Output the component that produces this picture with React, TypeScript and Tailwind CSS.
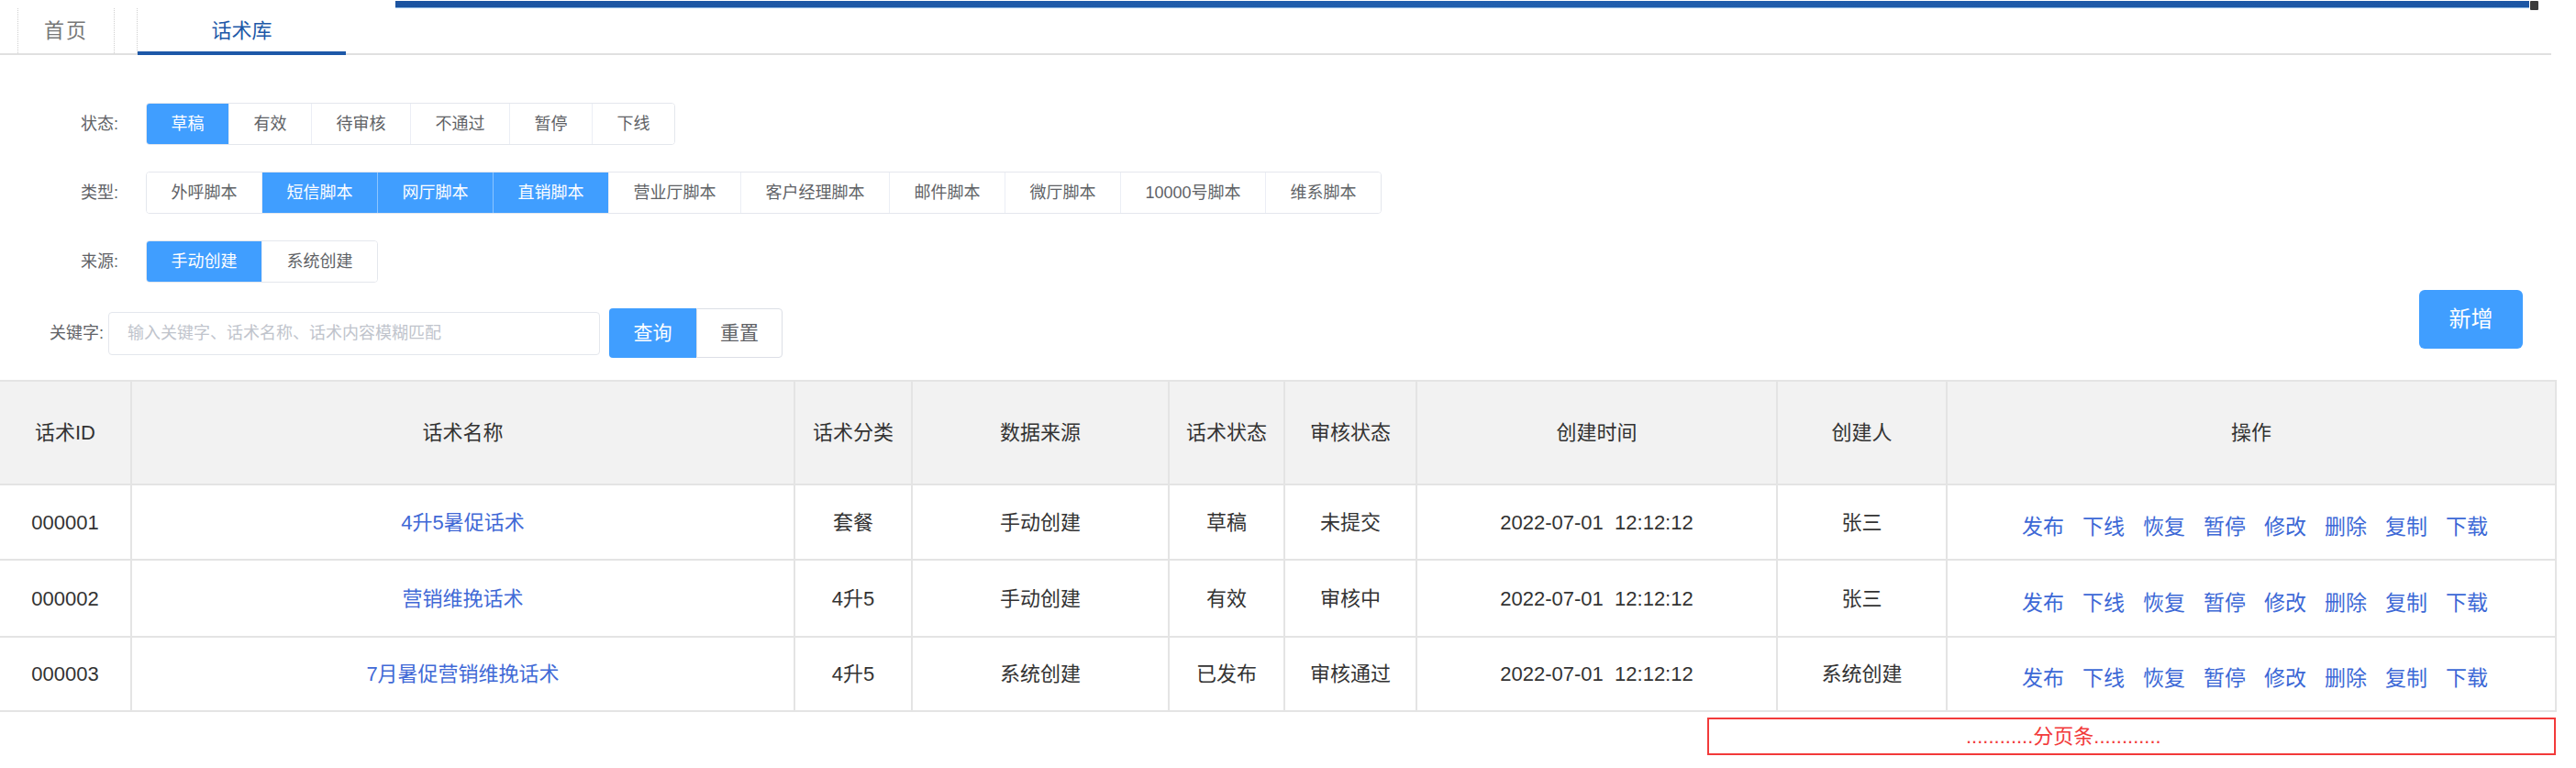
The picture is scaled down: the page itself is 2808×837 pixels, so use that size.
import React from 'react'

const statusItems = [
  { label: '草稿', active: true },
  { label: '有效' },
  { label: '待审核' },
  { label: '不通过' },
  { label: '暂停' },
  { label: '下线' },
]

const typeItems = [
  { label: '外呼脚本' },
  { label: '短信脚本', active: true },
  { label: '网厅脚本', active: true },
  { label: '直销脚本', active: true },
  { label: '营业厅脚本' },
  { label: '客户经理脚本' },
  { label: '邮件脚本' },
  { label: '微厅脚本' },
  { label: '10000号脚本' },
  { label: '维系脚本' },
]

const sourceItems = [{ label: '手动创建', active: true }, { label: '系统创建' }]

const columns = [
  { title: '话术ID', col: 'w-[143px]' },
  { title: '话术名称', col: 'w-[723px]' },
  { title: '话术分类', col: 'w-[128px]' },
  { title: '数据来源', col: 'w-[280px]' },
  { title: '话术状态', col: 'w-[126px]' },
  { title: '审核状态', col: 'w-[144px]' },
  { title: '创建时间', col: 'w-[393px]' },
  { title: '创建人', col: 'w-[185px]' },
  { title: '操作', col: 'w-[664px]' },
]

const rows = [
  { id: '000001', name: '4升5暑促话术', kind: '套餐', source: '手动创建', status: '草稿', audit: '未提交', time: '2022-07-01  12:12:12', owner: '张三', h: 'h-[82px]' },
  { id: '000002', name: '营销维挽话术', kind: '4升5', source: '手动创建', status: '有效', audit: '审核中', time: '2022-07-01  12:12:12', owner: '张三', h: 'h-[84px]' },
  { id: '000003', name: '7月暑促营销维挽话术', kind: '4升5', source: '系统创建', status: '已发布', audit: '审核通过', time: '2022-07-01  12:12:12', owner: '系统创建', h: 'h-[81px]' },
]

const actions = ['发布', '下线', '恢复', '暂停', '修改', '删除', '复制', '下载']

type Item = { label: string; active?: boolean }

function Segmented({ items }: { items: Item[] }) {
  return (
    <div className="flex h-[46px] overflow-hidden rounded-[4px] border border-[#e4e7ed]">
      {items.map((item, i) => (
        <button
          key={item.label}
          className={
            'flex items-center px-[26.5px] text-[18px] ' +
            (i > 0 ? (item.active && items[i - 1].active ? 'border-l border-[#8cc5ff] ' : 'border-l border-[#ebeef5] ') : '') +
            (item.active ? 'bg-[#409eff] text-white' : 'bg-white text-[#606266]')
          }
        >
          {item.label}
        </button>
      ))}
    </div>
  )
}

function FilterRow({ label, items }: { label: string; items: Item[] }) {
  return (
    <div className="flex items-center">
      <span className="w-[71px] text-[18px] text-[#606266]">{label}</span>
      <Segmented items={items} />
    </div>
  )
}

export default function App() {
  return (
    <div className="h-[837px] w-[2808px] overflow-hidden bg-white font-['Liberation_Sans','Noto_Sans_CJK_SC',sans-serif] text-[#606266]">
      {/* top strip */}
      <div className="flex h-[9px] items-start pt-[1px]">
        <div className="ml-[431px] h-[8px] w-[2326px] border-b border-[#8fb9e3] bg-gradient-to-r from-[#1b53a0] via-[#215fae] to-[#1c56a4]" />
        <div className="ml-[1px] h-[10px] w-[9px] rounded-[1px] bg-[#3b3b3b]" />
      </div>

      {/* tabs */}
      <nav className="flex h-[51px] w-[2781px] border-b-2 border-[#e0e0e0]">
        <div className="ml-[19px] flex w-[106px] items-center justify-center border-x border-dotted border-[#cfcfcf] text-[22px] tracking-[2px] text-[#777]">
          首页
        </div>
        <div className="ml-[24px] border-l border-dotted border-[#cfcfcf]">
          <div className="-mb-[2px] flex h-[51px] w-[227px] items-center justify-center border-b-4 border-[#1d58a8] pt-[2px] text-[22px] text-[#1d58a8]">
            话术库
          </div>
        </div>
      </nav>

      {/* filters */}
      <section className="mt-[52px] flex flex-col gap-[29px] pl-[88px]">
        <FilterRow label="状态:" items={statusItems} />
        <FilterRow label="类型:" items={typeItems} />
        <FilterRow label="来源:" items={sourceItems} />
      </section>

      <div className="mt-[8px] flex items-start justify-between pr-[58px]">
        <div className="mt-[20px] flex items-center pl-[54px]">
          <span className="text-[18px] text-[#606266]">关键字:</span>
          <input
            className="ml-[5px] h-[47px] w-[536px] rounded-[4px] border border-[#e4e7ed] px-[20px] text-[18px] outline-none placeholder:text-[#c0c4cc]"
            placeholder="输入关键字、话术名称、话术内容模糊匹配"
          />
          <button className="ml-[10px] h-[54px] w-[95px] rounded-l-[4px] bg-[#409eff] text-[21px] text-white">查询</button>
          <button className="h-[54px] w-[94px] rounded-r-[4px] border border-[#dcdfe6] bg-white text-[21px] text-[#606266]">重置</button>
        </div>
        <button className="h-[64px] w-[113px] rounded-[6px] bg-[#409eff] text-[24px] text-white">新增</button>
      </div>

      {/* table */}
      <table className="mt-[24px] w-[2786px] table-fixed border-collapse text-[22px] text-[#333]">
        <colgroup>
          {columns.map((c) => (
            <col key={c.title} className={c.col} />
          ))}
        </colgroup>
        <thead>
          <tr className="h-[113px] bg-[#f2f2f2]">
            {columns.map((c, i) => (
              <th key={c.title} className={'border-2 border-[#e4e4e4] font-normal ' + (i === 0 ? 'border-l-0' : '')}>
                {c.title}
              </th>
            ))}
          </tr>
        </thead>
        <tbody>
          {rows.map((r) => (
            <tr key={r.id} className={r.h}>
              <td className="border-2 border-l-0 border-[#e4e4e4] text-center">{r.id}</td>
              <td className="border-2 border-[#e4e4e4] text-center text-[#4169d6]">{r.name}</td>
              <td className="border-2 border-[#e4e4e4] text-center">{r.kind}</td>
              <td className="border-2 border-[#e4e4e4] text-center">{r.source}</td>
              <td className="border-2 border-[#e4e4e4] text-center">{r.status}</td>
              <td className="border-2 border-[#e4e4e4] text-center">{r.audit}</td>
              <td className="whitespace-pre border-2 border-[#e4e4e4] text-center">{r.time}</td>
              <td className="border-2 border-[#e4e4e4] text-center">{r.owner}</td>
              <td className="border-2 border-[#e4e4e4] pt-[10px]">
                <div className="flex justify-center gap-[20px] pl-[8px] text-[23px] text-[#3c68d6]">
                  {actions.map((a, i) => (
                    <a key={i} className="cursor-pointer">
                      {a}
                    </a>
                  ))}
                </div>
              </td>
            </tr>
          ))}
        </tbody>
      </table>

      {/* pagination placeholder */}
      <div className="ml-[1861px] mt-[6px] flex h-[41px] w-[925px] items-center border-2 border-[#f23a3a] pl-[280px] text-[22px] text-[#f23a3a]">
        ............分页条............
      </div>
    </div>
  )
}
